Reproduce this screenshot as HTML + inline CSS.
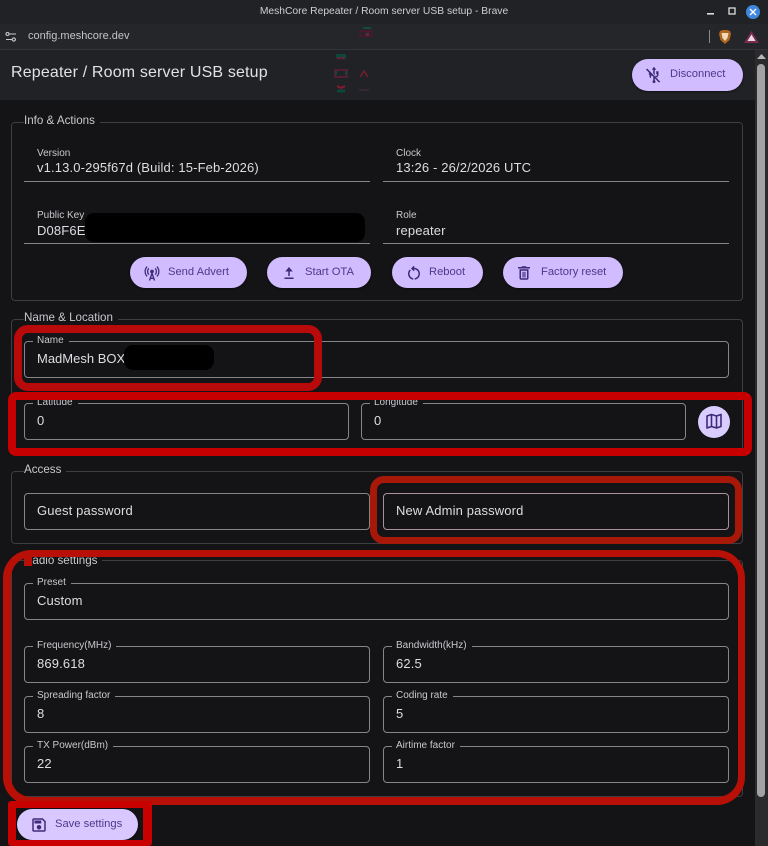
<!DOCTYPE html>
<html><head><meta charset="utf-8">
<style>
*{box-sizing:border-box}
html,body{margin:0;padding:0;width:768px;height:846px;overflow:hidden;background:#141417;font-family:"Liberation Sans",sans-serif;color:#e4e2e6}
#root{position:relative;width:768px;height:846px;overflow:hidden}
.a{position:absolute}
#top{left:0;top:0;width:768px;height:24px;background:#212226;color:#cfcfd2;font-size:10.3px;text-align:center;line-height:24px}
#addr{left:0;top:24px;width:768px;height:26px;background:#25262a;border-bottom:1px solid #34353a}
#bar{left:0;top:50px;width:755px;height:50px;background:#212226}
#track{left:755px;top:50px;width:13px;height:796px;background:#2b2b2d}
#thumb{left:757px;top:64px;width:8px;height:733px;background:#a2a2a4;border-radius:4px}
.fs{position:absolute;left:11px;width:732px;border:1px solid #3d3d42;border-radius:4px}
.lg{position:absolute;left:24px;font-size:11.6px;line-height:14px;background:#141417;padding-right:5px;color:#c9c8cc;height:14px}
.in{position:absolute;height:37px;border:1px solid #85858a;border-radius:4px}
.lb{position:absolute;left:8px;top:-8px;background:#141417;padding:0 5px 0 4px;font-size:10px;line-height:14px;color:#c9c8cc;white-space:nowrap}
.v{position:absolute;left:12px;top:9px;font-size:13px;line-height:16px;letter-spacing:.14px;color:#dedde1;white-space:nowrap}
.st{position:absolute;width:346px;height:1px;background:#85858a}
.sl{position:absolute;font-size:10px;line-height:12px;color:#c9c8cc}
.sv{position:absolute;font-size:13px;line-height:16px;letter-spacing:.14px;color:#dedde1;white-space:nowrap}
.b{position:absolute;height:31px;background:#d0bcff;border-radius:16px;color:#4f378b;font-size:11.2px;line-height:31px;white-space:nowrap;box-shadow:0 1px 2px rgba(0,0,0,.5)}
.b span{position:absolute;top:0}
.b svg{position:absolute;top:7px;width:18px;height:18px;fill:#3d2a78}
.r{position:absolute;border:8px solid #c60000;border-radius:14px}
.k{position:absolute;background:#000;border-radius:9px}
</style></head>
<body>
<div id="root">
<div id="top" class="a">MeshCore Repeater / Room server USB setup - Brave</div>
<svg class="a" style="left:704px;top:4px" width="62" height="16"><rect x="3" y="9" width="7" height="1.6" fill="#ddd"/><rect x="25" y="4" width="6" height="6" fill="none" stroke="#ddd" stroke-width="1.3"/><circle cx="49" cy="8" r="7" fill="#3f87dd"/><path d="M46 5l6 6M52 5l-6 6" stroke="#fff" stroke-width="1.4"/></svg>
<div id="addr" class="a"></div>
<svg class="a" style="left:5px;top:31px" width="12" height="12" fill="none" stroke="#c8c8cc" stroke-width="1.1"><path d="M4 3h7M1 8.5h6"/><circle cx="2.5" cy="3" r="1.5"/><circle cx="8.8" cy="8.5" r="1.6"/></svg>
<div class="a" style="left:28px;top:29px;font-size:11px;line-height:15px;color:#c4c4c8">config.meshcore.dev</div>
<div class="a" style="left:709px;top:30px;width:1px;height:13px;background:#8a8a8e"></div>
<svg class="a" style="left:718px;top:29px" width="14" height="16"><path d="M2 2l3-1h4l3 1 1 3-1.500 6-4.500 4-4.500-4L1 5z" fill="#b0661f"/><path d="M3.500 4h7l-1 5-2.500 3-2.500-3z" fill="#f0d8b8"/></svg>
<svg class="a" style="left:744px;top:30px" width="15" height="14"><path d="M7.500 1L15 13H0z" fill="#7a2c4f"/><path d="M7.500 4.500L11.500 11h-8z" fill="#e8dcec"/></svg>
<div id="bar" class="a"></div>
<div class="a" style="left:11px;top:63px;font-size:16px;line-height:20px;letter-spacing:.16px;color:#e2e1e5;white-space:nowrap">Repeater / Room server USB setup</div>
<svg class="a" style="left:330px;top:20px;opacity:.8" width="45" height="75" fill="none" stroke-width="1.500"><path d="M30 11h12v5H30z" stroke="#5a1530"/><path d="M33 8h8" stroke="#0c5a3a" stroke-width="2"/><path d="M36 13l3 3m0-3l-3 3" stroke="#86203a"/><path d="M6 36h10" stroke="#0c5040" stroke-width="4"/><path d="M7 39q4-2 8 0" stroke="#8c1c30"/><path d="M5 50h12v7H5z" stroke="#702038"/><path d="M5 53h2M15 53h2" stroke="#0c5040" stroke-width="4"/><path d="M7 66l4 2 4-2" stroke="#a01830" stroke-width="2"/><path d="M7 71h8" stroke="#0c5040" stroke-width="3"/><path d="M30 57l4-6 4 6" stroke="#8c1c30"/><path d="M29 70h10" stroke="#3a2a38" stroke-width="2"/></svg>
<div class="b" style="left:632px;top:59px;width:111px;height:32px"><svg style="left:13px" viewBox="0 0 24 24"><path d="M15 7v4h1v2h-3V5h2l-3-4-3 4h2v5.200l2 2V13h-.100l2.100 2.100v-.100h2v-2h1V7zM2.800 3.400L1.400 4.800 11 14.400V16H8v-2.100c.7-.4 1.200-1.100 1.200-1.900 0-.4-.1-.7-.3-1L6 8.100C5.400 8.500 5 9.200 5 10c0 .8.500 1.500 1 1.900V14c0 1.100.9 2 2 2h3v3.100a2 2 0 1 0 2 0v-2.700l5.800 5.800 1.400-1.400z"/></svg><span style="left:38px;top:0">Disconnect</span></div>
<div id="track" class="a"></div>
<div id="thumb" class="a"></div>
<svg class="a" style="left:757px;top:54px" width="9" height="6"><path d="M4.500 0L9 5H0z" fill="#b5b5b7"/></svg>

<!-- Info -->
<div class="fs" style="top:122px;height:179px"></div>
<div class="lg" style="top:114px">Info &amp; Actions</div>
<div class="sl" style="left:37px;top:148px">Version</div>
<div class="sv" style="left:37px;top:160px">v1.13.0-295f67d (Build: 15-Feb-2026)</div>
<div class="st" style="left:24px;top:181px"></div>
<div class="sl" style="left:396px;top:148px">Clock</div>
<div class="sv" style="left:396px;top:160px">13:26 - 26/2/2026 UTC</div>
<div class="st" style="left:383px;top:181px"></div>
<div class="sl" style="left:37px;top:210px">Public Key</div>
<div class="sv" style="left:37px;top:223px">D08F6E</div>
<div class="st" style="left:24px;top:243px"></div>
<div class="sl" style="left:396px;top:210px">Role</div>
<div class="sv" style="left:396px;top:223px">repeater</div>
<div class="st" style="left:383px;top:243px"></div>
<div class="k" style="left:85px;top:213px;width:280px;height:29px"></div>

<div class="b" style="left:130px;top:257px;width:117px"><svg style="left:13px" viewBox="0 0 24 24"><path d="M7.300 14.700l1.200-1.200c-1-1-1.500-2.300-1.500-3.500s.5-2.500 1.500-3.500L7.300 5.300C6 6.600 5.300 8.300 5.300 10s.7 3.400 2 4.700zM19.100 2.900l-1.200 1.200c1.600 1.600 2.400 3.800 2.400 5.900s-.8 4.300-2.400 5.900l1.200 1.200c2-2 2.900-4.500 2.900-7.100s-1-5.100-2.900-7.100zM6.100 4.100L4.900 2.900C3 4.900 2 7.400 2 10s1 5.100 2.900 7.100l1.200-1.200C4.500 14.300 3.700 12.100 3.700 10s.8-4.300 2.400-5.900zM16.700 14.700c1.300-1.300 2-3 2-4.700s-.7-3.400-2-4.700l-1.200 1.200c1 1 1.500 2.300 1.500 3.500s-.5 2.500-1.500 3.500zM14.500 10a2.500 2.500 0 1 0-3.500 2.300L7.700 22h1.900l.7-2h3.400l.7 2h1.900L13 12.300c.9-.4 1.500-1.300 1.500-2.300zm-3.600 8.300L12 15l1.100 3.300z"/></svg><span style="left:38px">Send Advert</span></div>
<div class="b" style="left:267px;top:257px;width:104px"><svg style="left:13px" viewBox="0 0 24 24"><path d="M11 16h2v-6h4l-5-6-5 6h4zM6 18h12v2H6z"/></svg><span style="left:38px">Start OTA</span></div>
<div class="b" style="left:392px;top:257px;width:91px"><svg style="left:13px" viewBox="0 0 24 24"><path d="M6 13c0-1.650.67-3.150 1.760-4.240L6.340 7.340C4.900 8.790 4 10.790 4 13c0 4.080 3.050 7.440 7 7.930v-2.020c-2.830-.48-5-2.940-5-5.910zm14 0c0-4.420-3.580-8-8-8-.06 0-.12.01-.18.01l1.090-1.090L11.500 2.500 8 6l3.500 3.500 1.410-1.410-1.080-1.080c.06 0 .12-.01.17-.01 3.310 0 6 2.690 6 6 0 2.970-2.170 5.430-5 5.910v2.020c3.950-.49 7-3.850 7-7.930z"/></svg><span style="left:37px">Reboot</span></div>
<div class="b" style="left:503px;top:257px;width:120px"><svg style="left:12px" viewBox="0 0 24 24"><path d="M6 19c0 1.100.9 2 2 2h8c1.100 0 2-.9 2-2V7H6zM8 9h8v10H8zm7.500-5l-1-1h-5l-1 1H4v2h16V4zM10 10.500h1.500V18H10zm2.500 0H14V18h-1.500z"/></svg><span style="left:38px">Factory reset</span></div>

<!-- Name -->
<div class="fs" style="top:319px;height:134px"></div>
<div class="lg" style="top:311px">Name &amp; Location</div>
<div class="in" style="left:24px;top:341px;width:705px"><div class="lb">Name</div><div class="v" style="letter-spacing:0">MadMesh BOX</div></div>
<div class="k" style="left:124px;top:345px;width:90px;height:25px"></div>
<div class="in" style="left:24px;top:403px;width:325px"><div class="lb">Latitude</div><div class="v">0</div></div>
<div class="in" style="left:361px;top:403px;width:325px"><div class="lb">Longitude</div><div class="v">0</div></div>
<div class="a" style="left:698px;top:406px;width:32px;height:32px;border-radius:50%;background:#d9ccff"></div>
<svg class="a" style="left:705px;top:413px" width="18" height="17" viewBox="0 0 18 17" fill="none" stroke="#3d2a78" stroke-width="1.600" stroke-linejoin="round"><path d="M2 3l4.500-1.500 5 1.500L16 1.500v12L11.500 15l-5-1.500L2 15zM6.500 1.500v12M11.500 3v12"/></svg>

<!-- Access -->
<div class="fs" style="top:471px;height:73px"></div>
<div class="lg" style="top:463px">Access</div>
<div class="in" style="left:24px;top:493px;width:346px"><div class="v">Guest password</div></div>
<div class="in" style="left:383px;top:493px;width:346px;border-color:#a8909c"><div class="v">New Admin password</div></div>

<!-- Radio -->
<div class="fs" style="top:560px;height:237px"></div>
<div class="lg" style="top:554px">Radio settings</div>
<div class="in" style="left:24px;top:583px;width:705px"><div class="lb">Preset</div><div class="v">Custom</div></div>
<div class="in" style="left:24px;top:646px;width:346px"><div class="lb">Frequency(MHz)</div><div class="v">869.618</div></div>
<div class="in" style="left:383px;top:646px;width:346px"><div class="lb">Bandwidth(kHz)</div><div class="v">62.5</div></div>
<div class="in" style="left:24px;top:696px;width:346px"><div class="lb">Spreading factor</div><div class="v">8</div></div>
<div class="in" style="left:383px;top:696px;width:346px"><div class="lb">Coding rate</div><div class="v">5</div></div>
<div class="in" style="left:24px;top:746px;width:346px"><div class="lb">TX Power(dBm)</div><div class="v">22</div></div>
<div class="in" style="left:383px;top:746px;width:346px"><div class="lb">Airtime factor</div><div class="v">1</div></div>

<div class="b" style="left:17px;top:809px;width:121px;background:#d8c8ff"><svg style="left:13px" viewBox="0 0 24 24"><path d="M17 3H5c-1.110 0-2 .9-2 2v14c0 1.100.89 2 2 2h14c1.100 0 2-.9 2-2V7l-4-4zm2 16H5V5h11.170L19 7.830V19zm-7-7c-1.660 0-3 1.340-3 3s1.340 3 3 3 3-1.340 3-3-1.340-3-3-3zM6 6h9v4H6z"/></svg><span style="left:38px">Save settings</span></div>

<!-- annotations -->
<div class="r" style="left:14px;top:325px;width:308px;height:66px;border-color:#b80a0a"></div>
<div class="r" style="left:8px;top:392px;width:744px;height:64px;border-radius:8px"></div>
<div class="r" style="left:370px;top:476px;width:372px;height:68px;border-width:7px;border-color:#a81808"></div>
<div class="r" style="left:3px;top:550px;width:742px;height:255px;border-radius:28px;border-width:7px 7px 8px 8px;border-color:#b81006"></div>
<div class="a" style="left:24px;top:553px;width:8px;height:13px;background:#b81006"></div>
<div class="r" style="left:8px;top:801px;width:144px;height:45px;border-radius:3px;border-width:7px 9px 6px 8px;border-color:#c80000"></div>
</div>
</body></html>
